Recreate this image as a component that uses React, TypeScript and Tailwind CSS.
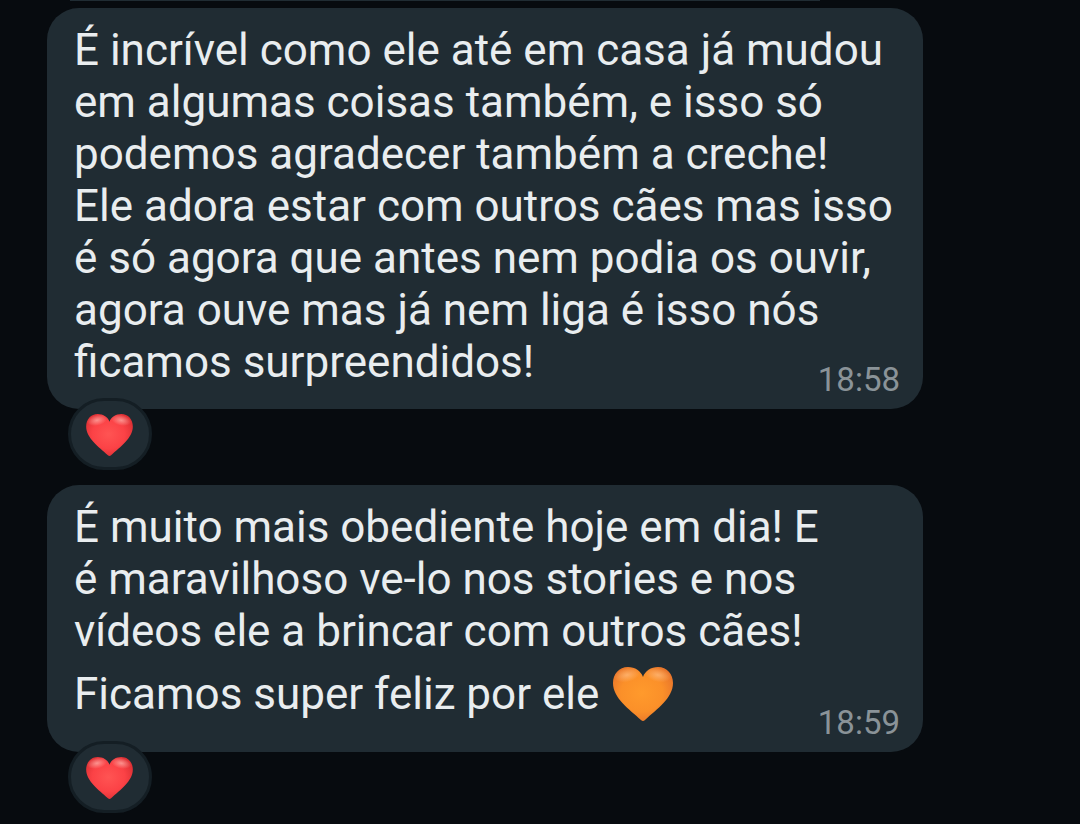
import { useId } from "react";

interface HeartProps {
  color: "red" | "orange";
  className: string;
}

interface Message {
  lines: string[];
  closing?: string;
  time: string;
}

const messages: Message[] = [
  {
    lines: [
      "É incrível como ele até em casa já mudou",
      "em algumas coisas também, e isso só",
      "podemos agradecer também a creche!",
      "Ele adora estar com outros cães mas isso",
      "é só agora que antes nem podia os ouvir,",
      "agora ouve mas já nem liga é isso nós",
      "ficamos surpreendidos!",
    ],
    time: "18:58",
  },
  {
    lines: [
      "É muito mais obediente hoje em dia! E",
      "é maravilhoso ve-lo nos stories e nos",
      "vídeos ele a brincar com outros cães!",
    ],
    closing: "Ficamos super feliz por ele",
    time: "18:59",
  },
];

const palette = {
  red: { light: "#ff5453", base: "#fb4246", dark: "#dc2f33", shine: "#ffa8a2" },
  orange: { light: "#ff9a2c", base: "#fb9029", dark: "#e8752b", shine: "#ffb877" },
};

const heartPath =
  "M30 10C28 4 22 0 15 0C6 0 0 7 0 16C0 31 16 42 28 53Q30 55 32 53C44 42 60 31 60 16C60 7 54 0 45 0C38 0 32 4 30 10Z";

function Heart({ color, className }: HeartProps) {
  const id = useId();
  const c = palette[color];

  return (
    <svg viewBox="0 0 60 54" className={className} role="img" aria-label={`${color} heart`}>
      <defs>
        <radialGradient id={id} cx="0.48" cy="0.48" r="0.58">
          <stop offset="0%" stopColor={c.light} />
          <stop offset="60%" stopColor={c.base} />
          <stop offset="100%" stopColor={c.dark} />
        </radialGradient>
        <radialGradient id={`${id}-shine`}>
          <stop offset="0%" stopColor={c.shine} stopOpacity={0.8} />
          <stop offset="100%" stopColor={c.shine} stopOpacity={0} />
        </radialGradient>
      </defs>
      <path d={heartPath} fill={`url(#${id})`} />
      <ellipse cx="14" cy="8" rx="13" ry="7" fill={`url(#${id}-shine)`} transform="rotate(-12 14 8)" />
      <ellipse cx="45" cy="8" rx="13" ry="7" fill={`url(#${id}-shine)`} transform="rotate(12 45 8)" />
    </svg>
  );
}

function Bubble({ lines, closing, time }: Message) {
  return (
    <article className="flex flex-col items-start">
      <div className="flex w-full flex-col rounded-[32px] bg-[#202c33] pt-4 pr-[23px] pb-2 pl-[27px]">
        <p className="whitespace-nowrap text-[44px] leading-[52px] text-[#e9edef]">
          {lines.map((line) => (
            <span key={line} className="block">{line}</span>
          ))}
          {closing && (
            <span className="flex h-[74px] items-center gap-3.5">
              {closing}
              <Heart color="orange" className="h-[54px] w-[60px]" />
            </span>
          )}
        </p>
        {/* time tucks up beside the last line */}
        <time className="-mt-[29px] self-end text-[33px] leading-[42px] text-[#8a9398]">{time}</time>
      </div>
      <button
        aria-label="Reactions"
        className="-mt-[11px] ml-[21px] flex h-[72px] w-[84px] items-center justify-center rounded-full border-[3px] border-[#141e24] bg-[#202c33] pt-0.5 pr-0.5"
      >
        <Heart color="red" className="h-[42px] w-[47px]" />
      </button>
    </article>
  );
}

export default function App() {
  return (
    <main className="flex min-h-screen flex-col gap-[7px] overflow-hidden bg-[#070b0f] pr-[157px] pl-[47px] font-['Roboto',sans-serif]">
      <div className="mr-[103px] ml-[23px] h-px bg-[#202c33]" />
      <div className="flex flex-col gap-[15px]">
        {messages.map((message) => (
          <Bubble key={message.time} {...message} />
        ))}
      </div>
    </main>
  );
}
